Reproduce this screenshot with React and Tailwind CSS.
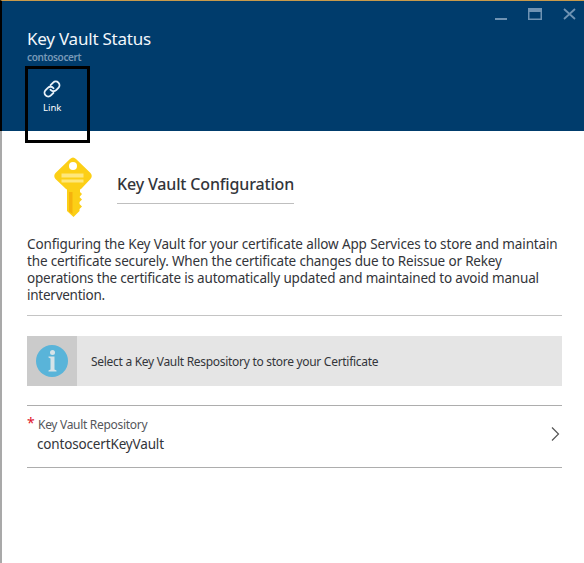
import React from "react";

function WindowControls() {
  return (
    <svg className="block" width="84" height="18" viewBox="0 0 84 18" fill="none">
      <path d="M0 15H12" stroke="#6f93b3" strokeWidth="2" />
      <path d="M33 4H47V16H33ZM34.500 8V14.500H45.500V8Z" fill="#6f93b3" fillRule="evenodd" />
      <path d="M69 5L80 15M80 5L69 15" stroke="#6f93b3" strokeWidth="1.800" />
    </svg>
  );
}

function LinkIcon() {
  return (
    <svg className="block" width="18" height="18" viewBox="0 0 24 24" fill="none" stroke="#e8f1f8" strokeWidth="2.5" strokeLinecap="round">
      <path d="M10 13a5 5 0 0 0 7.54.54l3-3a5 5 0 0 0-7.07-7.07l-3.400 3.400" />
      <path d="M14 11a5 5 0 0 0-7.54-.54l-3 3a5 5 0 0 0 7.07 7.07l3.400-3.400" />
    </svg>
  );
}

function KeyIcon() {
  return (
    <svg className="block" width="38" height="62" viewBox="0 0 38 62">
      <path d="M16 2Q19 -1 22 2L36.500 16Q39 19 36.500 22L28 31Q27 32 26 32.500V35L28 37L25.500 40L28 42.500L25.500 45V47L28 49.500L25.500 52V54L19.500 60L13 54V32.500Q12 32 11 31L1.500 22Q-1 19 1.500 16Z" fill="#fccf16" />
      <circle cx="19" cy="9" r="4" fill="#fff" />
      <path d="M7.500 16.500H29.500V20.500H7.500ZM7.500 22.500H29.500V25.500H7.500Z" fill="#fee77d" />
      <path d="M15 35H18.500V57L15 54.500Z" fill="#f5b20d" />
    </svg>
  );
}

function InfoIcon() {
  return (
    <svg className="block" width="32" height="32" viewBox="0 0 32 32">
      <circle cx="16" cy="16" r="16" fill="#59b4d9" />
      <circle cx="16.500" cy="7.500" r="2.500" fill="#d6e3e8" />
      <path d="M12.500 11.500H18.500V24.500L20.500 25.500V26.500H12.500V25.500L14.500 24.500V13.500L12.500 12.500Z" fill="#d6e3e8" />
    </svg>
  );
}

export default function App() {
  return (
    <div className="flex h-[563px] w-[584px] flex-col overflow-hidden bg-white font-['Noto_Sans',sans-serif] text-[#33353a]">
      <header className="h-[131px] shrink-0 border-t border-l-2 border-t-[#c89a4b] border-l-black bg-[#003c6c]">
        <div className="flex h-[27px] justify-end pr-[5px] pt-[3px]">
          <WindowControls />
        </div>
        <div className="pl-[25px]">
          <h1 className="h-[22px] whitespace-nowrap text-[17px] leading-[22px] tracking-[-0.22px] text-[#f2f7fb]">Key Vault Status</h1>
          <p className="h-4 text-[10px] font-semibold leading-[15px] tracking-[-0.36px] text-[#7799b8]">contosocert</p>
        </div>
        <button className="relative ml-[23px] flex h-[77px] w-[65px] flex-col items-start border-[3px] border-black pl-[15px] pt-[11px]">
          <LinkIcon />
          <span className="mt-[3px] text-[9.5px] leading-[13px] text-white">Link</span>
        </button>
      </header>
      <main className="grow border-l-2 border-[#a9a9a9] pl-[25px] pr-[22px]">
        <section className="flex pl-[27px] pt-[26px]">
          <KeyIcon />
          <h2 className="ml-[25px] mt-[15px] h-[32px] w-[177px] whitespace-nowrap border-b border-[#bfbfbf] text-[16px] font-medium leading-[24px] tracking-[-0.16px]">Key Vault Configuration</h2>
        </section>
        <p className="mt-[17px] h-[80px] whitespace-nowrap border-b border-[#c4c4c4] text-[13.5px] leading-[17px]">
          <span className="tracking-[-0.137px]">Configuring the Key Vault for your certificate allow App Services to store and maintain</span><br />
          <span className="tracking-[-0.167px]">the certificate securely. When the certificate changes due to Reissue or Rekey</span><br />
          <span className="tracking-[-0.19px]">operations the certificate is automatically updated and maintained to avoid manual</span><br />
          <span className="tracking-[-0.25px]">intervention.</span>
        </p>
        <div className="mt-5 flex h-[50px] items-center bg-[#e5e5e5]">
          <div className="flex h-full w-[50px] items-center justify-center bg-[#cbcbcb]">
            <InfoIcon />
          </div>
          <span className="ml-[14px] whitespace-nowrap pt-[2px] text-[12px] tracking-[-0.29px]">Select a Key Vault Respository to store your Certificate</span>
        </div>
        <div className="mt-[19px] flex h-[63px] items-center justify-between border-y border-[#adadad]">
          <div className="-mt-1 grid grid-cols-[10px_auto] whitespace-nowrap">
            <span className="h-[18px] text-[14px] leading-[14px] text-[#e0142c]">*</span>
            <span className="pl-px text-[12px] leading-[18px] tracking-[-0.3px] text-[#55575b]">Key Vault Repository</span>
            <span className="col-start-2 text-[13.5px] leading-[20px] tracking-[-0.16px]">contosocertKeyVault</span>
          </div>
          <svg className="-mt-[6px] mr-[2px]" width="10" height="16" viewBox="0 0 10 16" fill="none" stroke="#555" strokeWidth="1.200">
            <path d="M2 1.500L8.500 8L2 14.500" />
          </svg>
        </div>
      </main>
    </div>
  );
}
